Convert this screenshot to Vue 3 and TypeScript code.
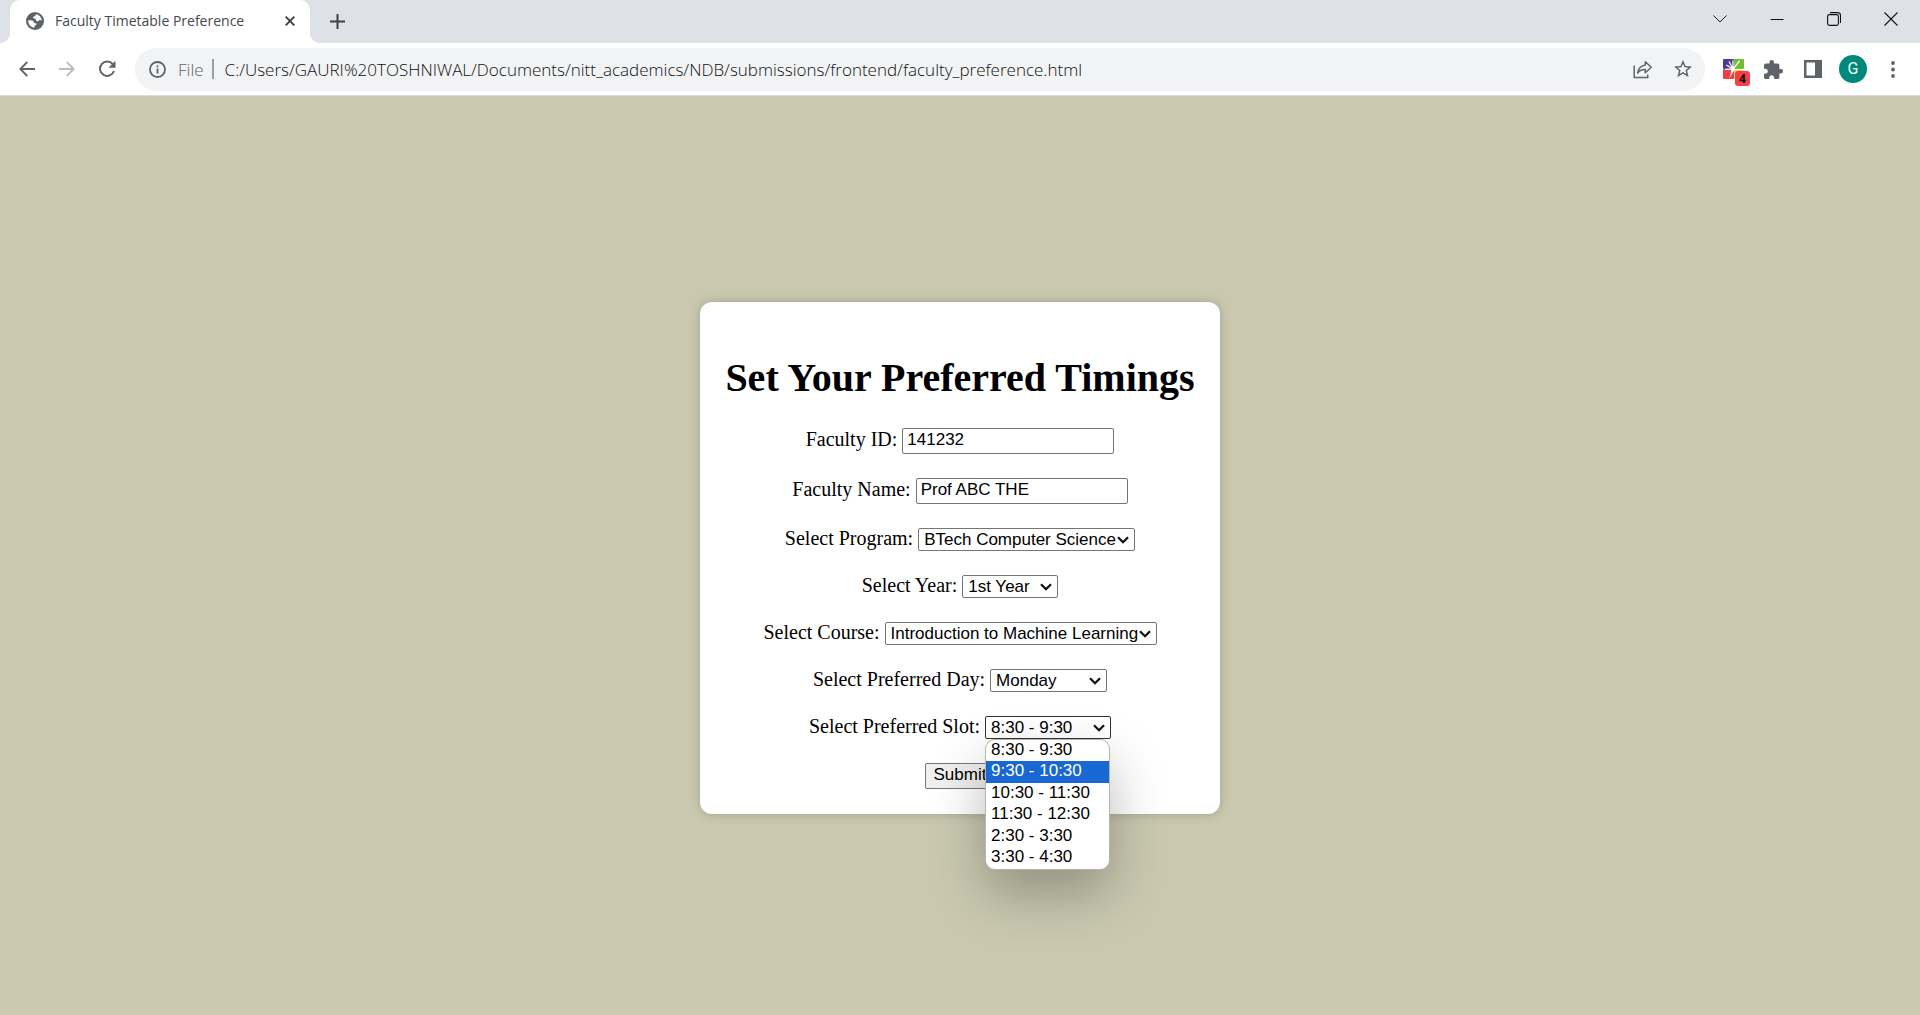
<script setup lang="ts">
import { ref } from 'vue'

interface SelectField {
  id: string
  label: string
  size: string
  options: string[]
}

const facultyId = ref('141232')
const facultyName = ref('Prof ABC THE')
const address = ref('C:/Users/GAURI%20TOSHNIWAL/Documents/nitt_academics/NDB/submissions/frontend/faculty_preference.html')

const selects: SelectField[] = [
  { id: 'program', label: 'Select Program:', size: 'program', options: ['BTech Computer Science'] },
  { id: 'year', label: 'Select Year:', size: 'year', options: ['1st Year'] },
  { id: 'course', label: 'Select Course:', size: 'course', options: ['Introduction to Machine Learning'] },
  { id: 'day', label: 'Select Preferred Day:', size: 'day', options: ['Monday'] },
]

const slots: string[] = ['8:30 - 9:30', '9:30 - 10:30', '10:30 - 11:30', '11:30 - 12:30', '2:30 - 3:30', '3:30 - 4:30']
const slot = ref(slots[0])
const highlighted = ref(1)
</script>

<template>
  <div class="window">
    <header>
      <div class="tabstrip">
        <div class="tab">
          <svg class="globe" width="18" height="18" viewBox="0 0 18 18">
            <circle cx="9" cy="9" r="9" fill="#5f6368" />
            <path d="M10 2.2c-.3 1.300-1 2-2.300 2.200-.6.1-.6 1-.3 1.600.4.8 1.600.4 2.200 1.100.6.8.2 1.900 1.300 2.100 1.500.2 1.700-1.200 3-1.300.8 0 1.500.5 1.900.8-.1-3.200-2.400-6-5.800-6.500z" fill="#fff" />
            <path d="M2.200 8.300c1.600.2 3.300-.1 4.600.5 1.200.6.6 1.700 1.500 2.200.8.4 2.200 0 2.300 1 .1 1.100-1.700 1-2 2.100-.1.600-.1 1.200 0 1.700-3.800-.2-6.500-3.400-6.400-7.500z" fill="#fff" />
          </svg>
          <span class="tab-title">Faculty Timetable Preference</span>
          <button class="plain tab-close" aria-label="Close tab">
            <svg width="10" height="10" viewBox="0 0 10 10"><path d="M.7.7l8.600 8.600M9.300.7L.7 9.300" stroke="#3c4043" stroke-width="1.900" /></svg>
          </button>
        </div>
        <button class="plain new-tab" aria-label="New tab">
          <svg width="15" height="15" viewBox="0 0 15 15"><path d="M7.500 0v15M0 7.500h15" stroke="#3c4043" stroke-width="2" /></svg>
        </button>
        <div class="window-controls">
          <button class="plain" aria-label="Search tabs">
            <svg width="14" height="14" viewBox="0 0 14 14"><path d="M.5 3.500L7 10l6.500-6.500" fill="none" stroke="#222" /></svg>
          </button>
          <button class="plain" aria-label="Minimize">
            <svg width="14" height="14" viewBox="0 0 14 14"><path d="M.5 7.500h13" stroke="#111" /></svg>
          </button>
          <button class="plain" aria-label="Restore">
            <svg width="14" height="14" viewBox="0 0 14 14" fill="none" stroke="#111" stroke-width="1.100"><rect x=".6" y="2.600" width="10.800" height="10.800" rx="1.800" /><path d="M3 .6h7.500a3 3 0 0 1 3 3V11" /></svg>
          </button>
          <button class="plain" aria-label="Close">
            <svg width="14" height="14" viewBox="0 0 14 14"><path d="M.5.5l13 13M13.500.5l-13 13" stroke="#111" stroke-width="1.100" /></svg>
          </button>
        </div>
      </div>

      <div class="toolbar">
        <button class="plain nav" aria-label="Back">
          <svg width="16" height="16" viewBox="0 0 16 16"><path d="M16 8H1.500M8.300 1L1.300 8l7 7" fill="none" stroke="#5f6368" stroke-width="1.800" /></svg>
        </button>
        <button class="plain nav" aria-label="Forward">
          <svg width="16" height="16" viewBox="0 0 16 16"><path d="M0 8h14.500M7.700 1l7 7-7 7" fill="none" stroke="#babcbe" stroke-width="1.800" /></svg>
        </button>
        <button class="plain nav" aria-label="Reload">
          <svg width="18" height="18" viewBox="0 0 18 18"><path d="M14.800 4.200A7.200 7.200 0 1 0 16 11" fill="none" stroke="#5f6368" stroke-width="2" /><path d="M17.500.8v7H10.500z" fill="#5f6368" /></svg>
        </button>
        <div class="omnibox">
          <button class="plain site-info">
            <svg width="17" height="17" viewBox="0 0 17 17"><circle cx="8.500" cy="8.500" r="7.500" fill="none" stroke="#5f6368" stroke-width="1.800" /><path d="M8.500 7.600v4.800M8.500 4.500v1.800" stroke="#5f6368" stroke-width="1.800" /></svg>
            <span>File</span>
          </button>
          <span class="divider"></span>
          <input v-model="address" class="address" type="text" aria-label="Address" spellcheck="false" />
          <button class="plain action" aria-label="Share">
            <svg width="20" height="19" viewBox="0 0 20 19" fill="none" stroke="#5f6368" stroke-width="1.500"><path d="M1.200 5.500v12h13.500v-3" /><path d="M12.300 1.800l6 5.500-6 5.400V9.600c-3.400 0-5.900 1-7.600 3.500.6-4.200 3.300-7.300 7.600-8z" stroke-linejoin="round" /></svg>
          </button>
          <button class="plain action" aria-label="Bookmark">
            <svg width="18" height="18" viewBox="2 2 20 20"><path fill="#5f6368" d="M22 9.240l-7.190-.62L12 2 9.190 8.630 2 9.240l5.460 4.730L5.820 21 12 17.270 18.180 21l-1.630-7.030L22 9.240zM12 15.400l-3.760 2.270 1-4.280-3.320-2.880 4.380-.38L12 6.100l1.710 4.040 4.380.38-3.320 2.880 1 4.280L12 15.400z" /></svg>
          </button>
        </div>
        <div class="tools">
          <button class="plain extension" aria-label="Extension">
            <svg width="21" height="21" viewBox="0 0 21 21">
              <rect width="11" height="10" rx="1" fill="#513a8c" /><rect x="11" width="10" height="10" rx="1" fill="#6cbf33" />
              <rect y="10" width="11" height="10" rx="1" fill="#ef3e42" /><rect x="11" y="11" width="10" height="9" rx="1" fill="#f6c65b" />
              <path d="M10 10L3.500 6M10 10L6 2.500M10 10V1.500M10 10l6.500-8M10 10l-8 .3" stroke="#fff" stroke-width="1.300" />
              <path d="M9 9l3 1-6 10c1.500-4 2-5.500 2-9z" fill="#fff" />
            </svg>
            <span class="badge">4</span>
          </button>
          <button class="plain" aria-label="Extensions">
            <svg width="19" height="19" viewBox="2 1 21 21"><path fill="#5f6368" d="M20.500 11H19V7c0-1.100-.9-2-2-2h-4V3.500a2.500 2.500 0 0 0-5 0V5H4c-1.100 0-1.990.9-1.990 2v3.800H3.500c1.490 0 2.700 1.210 2.700 2.700s-1.210 2.700-2.700 2.700H2V20c0 1.100.9 2 2 2h3.800v-1.500c0-1.490 1.210-2.700 2.700-2.700s2.700 1.210 2.700 2.700V22H17c1.100 0 2-.9 2-2v-4h1.500a2.500 2.500 0 0 0 0-5z" /></svg>
          </button>
          <button class="plain" aria-label="Side panel">
            <svg width="18" height="18" viewBox="0 0 18 18"><path fill="#5f6368" fill-rule="evenodd" d="M0 0h18v18H0zM2.500 2.500v13H11v-13z" /></svg>
          </button>
          <button class="plain" aria-label="Profile"><span class="avatar">G</span></button>
          <button class="plain" aria-label="Menu">
            <svg width="4" height="17" viewBox="0 0 4 17" fill="#5f6368"><circle cx="2" cy="2" r="1.900" /><circle cx="2" cy="8.500" r="1.900" /><circle cx="2" cy="15" r="1.900" /></svg>
          </button>
        </div>
      </div>
    </header>

    <main>
      <form class="card" @submit.prevent>
        <h1>Set Your Preferred Timings</h1>
        <div class="fields">
          <div class="row">
            <label for="faculty-id">Faculty ID:</label>
            <input id="faculty-id" v-model="facultyId" class="text" type="text" />
          </div>
          <div class="row">
            <label for="faculty-name">Faculty Name:</label>
            <input id="faculty-name" v-model="facultyName" class="text" type="text" />
          </div>
          <div v-for="field in selects" :key="field.id" class="row">
            <label :for="field.id">{{ field.label }}</label>
            <span class="select" :class="field.size">
              <select :id="field.id">
                <option v-for="option in field.options" :key="option">{{ option }}</option>
              </select>
              <svg class="chevron" width="12" height="8" viewBox="0 0 12 8"><path d="M1 1.200l5 5 5-5" fill="none" stroke="#111" stroke-width="2.300" /></svg>
            </span>
          </div>
          <div class="row">
            <label for="slot">Select Preferred Slot:</label>
            <span class="select slot">
              <select id="slot" v-model="slot">
                <option v-for="option in slots" :key="option">{{ option }}</option>
              </select>
              <svg class="chevron" width="12" height="8" viewBox="0 0 12 8"><path d="M1 1.200l5 5 5-5" fill="none" stroke="#111" stroke-width="2.300" /></svg>
              <ul class="popup" role="listbox" aria-label="Slots">
                <li v-for="(option, i) in slots" :key="option" role="option" :aria-selected="i === highlighted" :class="{ active: i === highlighted }" @mouseenter="highlighted = i">{{ option }}</li>
              </ul>
            </span>
          </div>
          <div class="row">
            <button class="submit" type="submit">Submit</button>
          </div>
        </div>
      </form>
    </main>
  </div>
</template>

<style>
body {
  margin: 0;
}
</style>

<style scoped>
* {
  box-sizing: border-box;
}
.window {
  display: flex;
  flex-direction: column;
  min-height: 100vh;
  background: #cac9b0;
  font-family: "Open Sans", "Noto Sans", sans-serif;
}
.plain {
  display: flex;
  align-items: center;
  justify-content: center;
  padding: 0;
  border: 0;
  background: none;
  font: inherit;
}
.tabstrip {
  display: flex;
  height: 43px;
  padding: 0 1px 0 10px;
  background: #dee1e6;
}
.tab {
  position: relative;
  display: flex;
  align-items: center;
  width: 300px;
  padding: 0 15px 2px 16px;
  border-radius: 10px 10px 0 0;
  background: #fff;
}
.tab::before,
.tab::after {
  content: "";
  position: absolute;
  bottom: 0;
  width: 10px;
  height: 10px;
}
.tab::before {
  right: 100%;
  background: radial-gradient(circle at 0 0, transparent 10px, #fff 10px);
}
.tab::after {
  left: 100%;
  background: radial-gradient(circle at 100% 0, transparent 10px, #fff 10px);
}
.tab-title {
  flex: 1;
  margin-left: 11px;
  color: #45494d;
  font-size: 14px;
  white-space: nowrap;
}
.new-tab {
  width: 54px;
  padding-bottom: 1px;
}
.window-controls {
  display: flex;
  height: 37px;
  margin-left: auto;
}
.window-controls button {
  width: 57px;
}
.toolbar {
  display: flex;
  align-items: center;
  height: 53px;
  padding: 0 7px;
  border-bottom: 1px solid #dadce0;
  background: #fff;
}
.nav {
  width: 40px;
  height: 40px;
}
.omnibox {
  display: flex;
  flex: 1;
  align-items: center;
  height: 43px;
  margin-left: 8px;
  padding: 0 2px 0 14px;
  border-radius: 22px;
  background: #f1f3f4;
  font-size: 17px;
}
.site-info {
  gap: 12px;
  color: #5f6368;
}
.site-info,
.address {
  font-weight: 330;
}
.divider {
  width: 2px;
  height: 20px;
  margin: 0 11px 0 8px;
  background: #9b9ea2;
}
.address {
  flex: 1;
  padding: 0;
  border: 0;
  outline: 0;
  background: none;
  color: #111;
  font-family: inherit;
  font-size: inherit;
}
.action {
  width: 40px;
  height: 40px;
}
.tools {
  display: flex;
  align-items: center;
  margin-left: 8px;
}
.tools button {
  width: 40px;
  height: 40px;
}
.tools .extension {
  position: relative;
}
.badge {
  position: absolute;
  right: 3px;
  bottom: 3px;
  width: 15px;
  border-radius: 3px;
  background: #f44144;
  color: #111;
  font: 700 12px/15px "Open Sans", sans-serif;
}
.avatar {
  width: 28px;
  border-radius: 50%;
  background: #00897b;
  color: #fff;
  font: 16px/28px Roboto, sans-serif;
}
main {
  display: flex;
  flex: 1;
  align-items: center;
  justify-content: center;
  padding-top: 4px;
}
.card {
  padding: 25px;
  border-radius: 12px;
  background: #fff;
  box-shadow: 0 0 12px rgba(0, 0, 0, 0.2);
  color: #000;
  font-family: "Liberation Serif", serif;
  font-size: 20px;
  text-align: center;
}
h1 {
  margin: 28px 0 27px;
  font-size: 40px;
  line-height: 46px;
}
.fields {
  display: flex;
  flex-direction: column;
  gap: 24px;
}
.row {
  display: flex;
  align-items: center;
  justify-content: center;
  gap: 5px;
}
label {
  padding-bottom: 3px;
  line-height: 20px;
}
.text,
select,
.submit {
  border: 1px solid #767676;
  border-radius: 2px;
  background: #fff;
  color: #000;
  font: 17px "Liberation Sans", sans-serif;
}
.text {
  width: 212px;
  height: 26px;
  padding: 0 4px 1px;
}
.select {
  position: relative;
  display: flex;
}
select {
  width: 100%;
  height: 23px;
  padding: 0 0 0 5px;
  appearance: none;
}
.chevron {
  position: absolute;
  top: 8px;
  right: 6px;
  pointer-events: none;
}
.program {
  width: 217px;
}
.year {
  width: 96px;
}
.course {
  width: 272px;
}
.day {
  width: 117px;
}
.slot {
  width: 126px;
}
.slot select {
  border-color: #333;
}
.popup {
  position: absolute;
  top: 100%;
  left: 0;
  display: grid;
  width: 125px;
  height: 131px;
  margin: 0;
  padding: 0;
  overflow: hidden;
  border: 1px solid #b5b5ae;
  border-radius: 10px;
  background: #fff;
  box-shadow: 0 24px 54px rgba(0, 0, 0, 0.28);
  font: 17px/20px "Liberation Sans", sans-serif;
  list-style: none;
  text-align: left;
}
.popup li {
  padding-left: 5px;
}
.popup .active {
  background: #1967d2;
  color: #fff;
}
.submit {
  width: 71px;
  height: 26px;
  padding: 0 0 1px;
  background: #efefef;
}
</style>
